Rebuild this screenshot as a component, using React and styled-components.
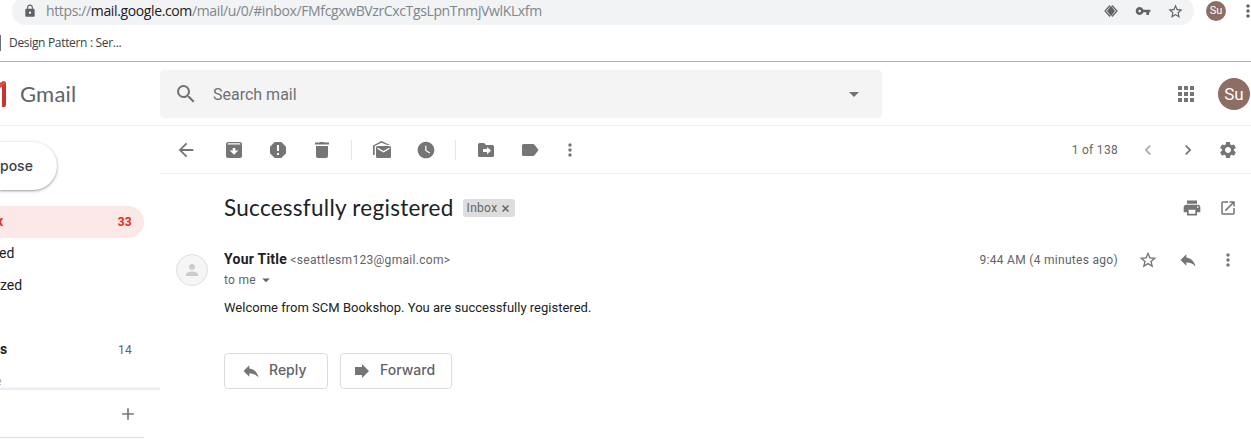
import React from 'react';
import styled, { createGlobalStyle } from 'styled-components';
import { MdArrowBack, MdSearch, MdLock, MdVpnKey, MdStarBorder, MdArrowDropDown, MdApps, MdWatchLater, MdMoreVert, MdChevronLeft, MdChevronRight, MdSettings, MdPrint, MdOpenInNew, MdReply, MdPerson, MdAdd } from 'react-icons/md';

const Global = createGlobalStyle`
  * { box-sizing: border-box; }
  body { margin: 0; background: #fff; font-family: Roboto, "Liberation Sans", sans-serif; overflow: hidden; }
  svg { flex: none; }
`;
const Page = styled.div`width: 1251px; height: 443px; overflow: hidden; display: flex; flex-direction: column;`;

/* Browser chrome */
const AddressRow = styled.div`display: flex; height: 25px; padding-left: 12px; flex: none;`;
const AddressBar = styled.div`
  display: flex; align-items: center; width: 1182px; height: 28px; margin-top: -3px; padding: 0 10px 0 11px;
  border-radius: 14px; background: #f1f3f4; color: #5f6368; flex: none;
`;
const Url = styled.div`
  flex: 1; margin-left: 9px; font: 14px/20px "Open Sans", sans-serif; letter-spacing: -0.37px;
  color: #80868b; white-space: nowrap;
  b { font-weight: 400; color: #202124; }
`;
const AddressIcons = styled.div`display: flex; align-items: center; gap: 16px;`;
const ChromeProfile = styled.div`
  width: 20px; height: 20px; margin: 1px 0 0 12px; border-radius: 50%; background: #8d6e63; color: #fff;
  font: 11px/20px Roboto, sans-serif; text-align: center; flex: none;
`;
const ChromeMenu = styled.div`display: flex; align-items: center; margin: -3px 0 0 12px; color: #5f6368; flex: none;`;
const BookmarkRow = styled.div`
  display: flex; align-items: center; height: 37px; flex: none; border-bottom: 1px solid #acacac;
  font: 12px/16px "Open Sans", sans-serif; letter-spacing: -0.32px; color: #3c4043;
`;
const BookmarkMark = styled.div`width: 1px; height: 16px; background: #6b6f76; margin-right: 8px;`;

/* Gmail header */
const Header = styled.header`display: flex; align-items: center; height: 64px; flex: none; border-bottom: 1px solid #eceff1;`;
const Brand = styled.div`display: flex; align-items: center; gap: 14px; width: 160px;`;
const BrandName = styled.span`font: 22px/28px Lato, sans-serif; color: #5f6368; letter-spacing: .2px;`;
const SearchBox = styled.div`
  display: flex; align-items: center; width: 722px; height: 48px; padding: 0 16px 0 14px; border-radius: 4px;
  background: #f4f4f4; color: #717171; font-size: 16px;
  span { flex: 1; margin: 2px 0 0 15px; letter-spacing: 0; }
`;
const HeaderActions = styled.div`display: flex; align-items: center; gap: 20px; margin-left: 292px; color: #757575;`;
const Avatar = styled.div`
  width: 32px; height: 32px; border-radius: 50%; background: #8d6e63; color: #fff; flex: none;
  font: 17px/33px Roboto, sans-serif; text-align: center;
`;

const Body = styled.div`display: flex; flex: 1; min-height: 0;`;

/* Sidebar */
const Sidebar = styled.aside`display: flex; flex-direction: column; width: 160px; height: 317px; padding-top: 16px;`;
const Compose = styled.div`
  width: 57px; height: 48px; border-radius: 0 24px 24px 0; flex: none;
  font: 500 14px/47px Inter, sans-serif; color: #3c4043; letter-spacing: 0;
  box-shadow: 0 1px 2px rgba(60,64,67,.35), 0 1px 3px 1px rgba(60,64,67,.15);
`;
const Folders = styled.nav`height: 181px; margin-top: 16px; overflow: hidden;`;
const Folder = styled.div`
  display: flex; align-items: center; justify-content: space-between; width: 144px; height: 32px; padding-right: 12px;
  margin-top: ${p => p.$gap || 0}px; border-radius: 0 16px 16px 0; font-size: 14px; color: #202124;
  font-weight: ${p => (p.$strong ? 700 : 400)};
  background: ${p => (p.$active ? '#fce8e6' : 'transparent')};
  ${p => p.$active && 'color: #d93025;'}
  small { font-size: 12px; letter-spacing: .3px; font-weight: ${p => (p.$active ? 700 : 400)}; color: ${p => (p.$active ? '#d93025' : '#5f6368')}; }
`;
const FolderLabel = styled.span`margin: -2px 0 0 ${p => p.$shift || 0}px; ${p => p.$faint && 'color: #9a9da0;'}`;
const SidebarEdge = styled.div`height: 3px; background: linear-gradient(#f6f8f9, #e4e9ec); flex: none;`;
const ChatBar = styled.div`
  display: flex; align-items: center; justify-content: flex-end; width: 144px; height: 48px; padding-right: 6px;
  border-bottom: 1px solid #dedfe0; color: #777; flex: none;
`;

/* Message */
const Main = styled.main`display: flex; flex-direction: column; width: 1091px;`;
const Toolbar = styled.div`
  display: flex; align-items: center; height: 48px; padding: 0 13px 0 16px; border-bottom: 1px solid #eceff1; color: #757575; flex: none;
`;
const Tool = styled.span`
  display: flex; align-items: center; justify-content: center; width: 20px; height: 20px; flex: none;
  margin-left: ${p => p.$gap || 0}px; color: ${p => (p.$dim ? '#a9a9a9' : '#757575')};
`;
const Divider = styled.i`width: 1px; height: 20px; background: #e3e5e8; margin-left: ${p => p.$gap}px;`;
const Count = styled.span`margin-left: auto; font-size: 12px; letter-spacing: .3px; color: #666;`;
const SubjectRow = styled.div`display: flex; align-items: center; height: 36px; margin-top: 16px; padding: 0 13px 0 64px; flex: none;`;
const Subject = styled.h1`
  margin: 0; font: 400 22.5px/28px Lato, sans-serif; letter-spacing: .27px; color: #202124; white-space: nowrap;
`;
const Chip = styled.span`
  display: flex; align-items: center; gap: 5px; width: 52px; height: 18px; margin-left: 9px; padding-left: 4px; border-radius: 3px;
  background: #ddd; color: #666; font-size: 12px; letter-spacing: .3px;
`;
const Actions = styled.div`display: flex; align-items: center; margin-left: auto;`;
const SenderRow = styled.div`display: flex; height: 44px; margin-top: 23px; padding: 0 13px 0 16px; flex: none;`;
const PersonBadge = styled.div`
  display: flex; align-items: center; justify-content: center; width: 32px; height: 32px; margin-top: 5px;
  border: 1px solid #e0e0e0; border-radius: 50%; background: #f5f5f5; color: #ccc;
`;
const SenderText = styled.div`
  margin-left: 16px; font-size: 12px; letter-spacing: .3px; color: #5f6368; line-height: 20px;
  b { font-size: 14px; letter-spacing: .25px; color: #202124; }
`;
const Recipient = styled.div`display: flex; align-items: center; gap: 1px;`;
const Meta = styled.div`display: flex; align-items: center; height: 22px; margin-left: auto; font-size: 12px; letter-spacing: .3px; color: #5f6368;`;
const MessageText = styled.p`margin: 5px 0 0 64px; font-size: 13px; line-height: 20px; letter-spacing: .01px; color: #222;`;
const Replies = styled.div`display: flex; gap: 12px; margin: 35px 0 0 64px;`;
const ReplyButton = styled.div`
  display: flex; align-items: center; width: ${p => p.$w}px; height: 36px; padding-left: ${p => p.$pad}px; gap: ${p => p.$gap}px;
  border: 1px solid #dadce0; border-radius: 4px; color: #5f6368; font: 500 14px/20px Inter, sans-serif;
  svg { color: #757575; }
  span { margin-top: -2px; }
`;

const Glyph = ({ d, w = 20, h = 20 }) => (
  <svg width={w} height={h} viewBox={`0 0 ${w} ${h}`} fill="currentColor" fillRule="evenodd"><path d={d} /></svg>
);
const ARCHIVE = 'M4 2h12q2 0 2 2v12q0 2-2 2H4q-2 0-2-2V4q0-2 2-2zM4 3.3L3.5 4.5h13L16 3.3zM8.700 8v2.500H5.700l4.300 4.300 4.300-4.300h-3V8z';
const SPAM = 'M6.7 2h6.6L18 6.7v6.6L13.3 18H6.7L2 13.3V6.7zM9 5v6h2V5zM9 13v2h2v-2z';
const TRASH = 'M3 2.500h4.500L8 2h4l.5.5H17v2H3zM4 6h12v10q0 2-2 2H6q-2 0-2-2z';
const UNREAD = 'M1 15V5.500L9.500 1 18 5H15.500L9.500 2.700 2.700 6V15zM5.500 6H17.500Q19 6 19 7.500V16.500Q19 18 17.500 18H5.500Q4 18 4 16.500V7.500Q4 6 5.500 6zM5.500 7.500V9L11.500 12.500 17.500 9V7.500L11.500 11z';
const MOVE = 'M3.500 3H8l2 2h6.500Q18 5 18 6.500v9Q18 17 16.500 17h-13Q2 17 2 15.500v-11Q2 3 3.500 3zM11 7v2H7v3h4v2.500l4-4z';
const LABEL = 'M3.500 4H13q1 0 1.600.8L18.500 10l-3.900 5.200Q14 16 13 16H3.500Q2 16 2 14.500v-9Q2 4 3.500 4z';
const FORWARD = 'M0 3h7V0l7 7-7 7v-3H0z';

export default function App() {
  return (
    <Page>
      <Global />
      <AddressRow>
        <AddressBar>
          <MdLock size={14} />
          <Url>https://<b>mail.google.com</b>/mail/u/0/#inbox/FMfcgxwBVzrCxcTgsLpnTnmjVwlKLxfm</Url>
          <AddressIcons>
            <svg width="16" height="16" viewBox="0 0 16 16" fill="none" stroke="currentColor"><path d="M7 2.500L2 8l5 5.500M9 2.500l5 5.500-5 5.500" strokeWidth="1.200" /><path d="M8 2.800l4 5.200-4 5.200L4 8z" fill="currentColor" stroke="none" /></svg>
            <MdVpnKey size={16} />
            <MdStarBorder size={17} />
          </AddressIcons>
        </AddressBar>
        <ChromeProfile>Su</ChromeProfile>
        <ChromeMenu><MdMoreVert size={20} /></ChromeMenu>
      </AddressRow>
      <BookmarkRow><BookmarkMark />Design Pattern : Ser...</BookmarkRow>
      <Header>
        <Brand>
          <svg width="6" height="26" viewBox="0 0 6 26"><path d="M0 5.500V2L2.500.5Q6-.5 6 3V24q0 2-2 2H2V6z" fill="#c5372c" /><path d="M0 2L2.500.5Q5.500-.5 6 2.500L0 7z" fill="#e04a3f" /></svg>
          <BrandName>Gmail</BrandName>
        </Brand>
        <SearchBox><MdSearch size={24} /><span>Search mail</span><MdArrowDropDown size={24} /></SearchBox>
        <HeaderActions><MdApps size={24} /><Avatar>Su</Avatar></HeaderActions>
      </Header>
      <Body>
        <Sidebar>
          <Compose>pose</Compose>
          <Folders>
            <Folder $active $strong><FolderLabel $shift={-4}>x</FolderLabel><small>33</small></Folder>
            <Folder><FolderLabel $shift={-1}>ed</FolderLabel></Folder>
            <Folder><FolderLabel>zed</FolderLabel></Folder>
            <Folder $strong $gap={32}><FolderLabel>s</FolderLabel><small>14</small></Folder>
            <Folder><FolderLabel $shift={-6} $faint>e</FolderLabel></Folder>
          </Folders>
          <SidebarEdge />
          <ChatBar><MdAdd size={20} /></ChatBar>
        </Sidebar>
        <Main>
          <Toolbar>
            <Tool><MdArrowBack size={22} /></Tool>
            <Tool $gap={28}><Glyph d={ARCHIVE} /></Tool>
            <Tool $gap={24}><Glyph d={SPAM} /></Tool>
            <Tool $gap={24}><Glyph d={TRASH} /></Tool>
            <Divider $gap={19} />
            <Tool $gap={20}><Glyph d={UNREAD} /></Tool>
            <Tool $gap={24}><MdWatchLater size={20} /></Tool>
            <Divider $gap={19} />
            <Tool $gap={20}><Glyph d={MOVE} /></Tool>
            <Tool $gap={24}><Glyph d={LABEL} /></Tool>
            <Tool $gap={20}><MdMoreVert size={20} /></Tool>
            <Count>1 of 138</Count>
            <Tool $gap={20} $dim><MdChevronLeft size={20} /></Tool>
            <Tool $gap={20}><MdChevronRight size={20} /></Tool>
            <Tool $gap={20}><MdSettings size={20} /></Tool>
          </Toolbar>
          <SubjectRow>
            <Subject>Successfully registered</Subject>
            <Chip>Inbox
              <svg width="7" height="7" viewBox="0 0 7 7" fill="none" stroke="currentColor" strokeWidth="1.500"><path d="M.5.5l6 6M6.500.5l-6 6" /></svg>
            </Chip>
            <Actions><Tool><MdPrint size={20} /></Tool><Tool $gap={16}><MdOpenInNew size={18} /></Tool></Actions>
          </SubjectRow>
          <SenderRow>
            <PersonBadge><MdPerson size={18} /></PersonBadge>
            <SenderText>
              <div><b>Your Title</b> &lt;seattlesm123@gmail.com&gt;</div>
              <Recipient>to me<MdArrowDropDown size={18} /></Recipient>
            </SenderText>
            <Meta>
              9:44 AM (4 minutes ago)
              <Tool $gap={20}><MdStarBorder size={20} /></Tool>
              <Tool $gap={20}><MdReply size={20} /></Tool>
              <Tool $gap={20}><MdMoreVert size={20} /></Tool>
            </Meta>
          </SenderRow>
          <MessageText>Welcome from SCM Bookshop. You are successfully registered.</MessageText>
          <Replies>
            <ReplyButton $w={104} $pad={16} $gap={8}><MdReply size={20} /><span>Reply</span></ReplyButton>
            <ReplyButton $w={112} $pad={14} $gap={11}><Glyph d={FORWARD} w={14} h={14} /><span>Forward</span></ReplyButton>
          </Replies>
        </Main>
      </Body>
    </Page>
  );
}
